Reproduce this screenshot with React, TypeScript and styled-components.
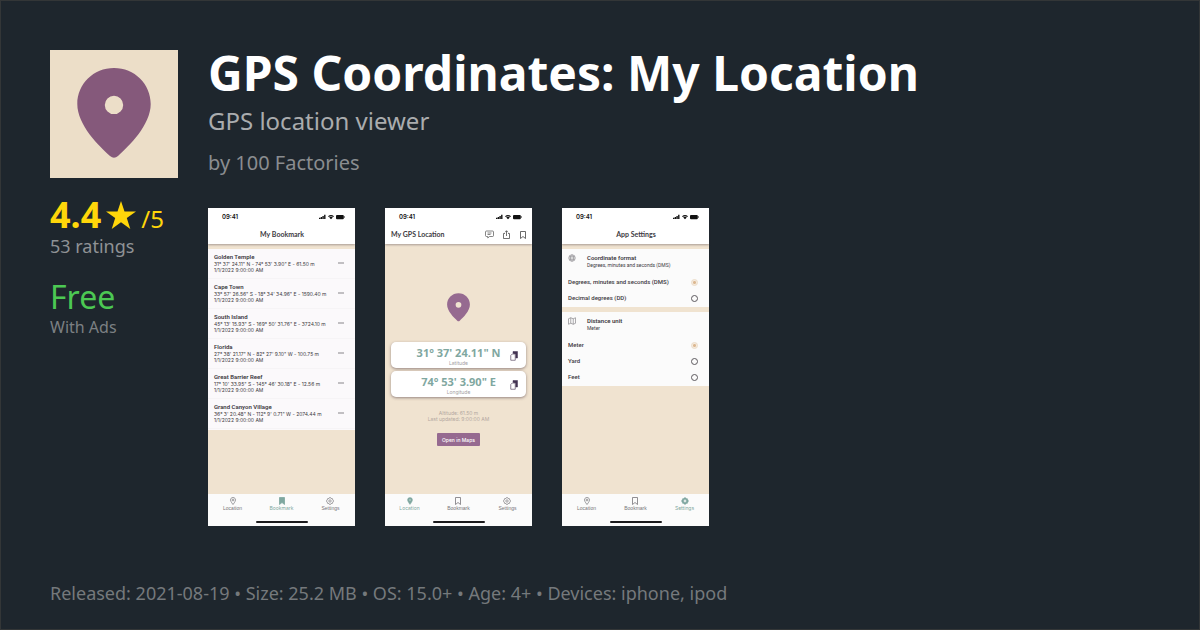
import React from "react";
import styled, { createGlobalStyle } from "styled-components";

const GlobalStyle = createGlobalStyle`
  *, *::before, *::after { box-sizing: border-box; }
  body { margin: 0; background: #1e262d; }
  h1, h2, h3, p, ul, fieldset { margin: 0; padding: 0; border: 0; }
  button, input { margin: 0; padding: 0; border: 0; background: none; font: inherit; color: inherit; }
  svg { display: block; flex: none; }
`;

const Page = styled.div`
  display: flex;
  flex-direction: column;
  min-height: 100vh;
  padding: 49px 49px 24px;
  border: 1px solid #333637;
  background: #1e262d;
  font-family: "Noto Sans", "Open Sans", sans-serif;
`;

const Header = styled.header`
  display: flex;
  gap: 30px;
`;

const Heading = styled.div`
  display: flex;
  flex-direction: column;
  gap: 8px;
  padding-top: 1px;
`;

const Title = styled.h1`
  font-size: 48px;
  line-height: 44px;
  font-weight: 700;
  color: #fff;
`;

const Subtitle = styled.p`
  font-size: 24px;
  line-height: 36px;
  color: #aaacae;
`;

const Author = styled.p`
  font-size: 20px;
  line-height: 32px;
  color: #8a8d90;
`;

const Body = styled.div`
  display: flex;
  gap: 30px;
  padding-top: 17px;
`;

const Stats = styled.aside`
  display: flex;
  flex-direction: column;
  width: 128px;
  flex: none;
`;

const Rating = styled.p`
  display: flex;
  align-items: baseline;
  gap: 5px;
  height: 38px;
  font-size: 36px;
  line-height: 38px;
  color: #ffd60a;
  svg { align-self: center; }
`;

const OutOf = styled.span`
  font-size: 24px;
  line-height: 24px;
`;

const Price = styled.p`
  margin-top: 21px;
  font-size: 32px;
  line-height: 36px;
  color: #4cc853;
`;

const Note = styled.p<{ $size: number; $color: string }>`
  font-size: ${(p) => p.$size}px;
  line-height: 24px;
  color: ${(p) => p.$color};
`;

const Shots = styled.div`
  display: flex;
  flex-wrap: wrap;
  gap: 30px;
  padding-top: 12px;
`;

const Footer = styled.footer`
  margin-top: auto;
  font-size: 18px;
  line-height: 24px;
  color: #75797c;
`;

const Phone = styled.section`
  display: flex;
  flex-direction: column;
  width: 147px;
  height: 318px;
  background: #f0e3d0;
  color: #3d3a42;
  font-family: Inter, "Open Sans", sans-serif;
  font-size: 5px;
  line-height: 6px;
`;

const Top = styled.div`
  height: 36px;
  background: #fff;
  box-shadow: 0 1px 2px rgba(60, 50, 60, 0.4);
`;

const StatusBar = styled.div`
  display: flex;
  align-items: center;
  gap: 3px;
  height: 17px;
  padding: 0 10px 0 14px;
  font-size: 6px;
  font-weight: 600;
  color: #111;
  span { margin-right: auto; }
`;

const NavBar = styled.div<{ $start?: boolean }>`
  display: flex;
  align-items: center;
  justify-content: ${(p) => (p.$start ? "flex-start" : "center")};
  gap: 8px;
  height: 19px;
  padding: 0 5px 0 6px;
`;

const NavTitle = styled.h2<{ $start?: boolean }>`
  font-family: Lato, "Noto Sans", sans-serif;
  font-size: 7px;
  line-height: 9px;
  font-weight: 700;
  margin-right: ${(p) => (p.$start ? "auto" : "0")};
`;

const IconButton = styled.button<{ $color?: string }>`
  display: flex;
  color: ${(p) => p.$color || "#444"};
`;

const Screen = styled.div`
  display: flex;
  flex-direction: column;
  flex: 1;
  gap: 5px;
  padding-top: 5px;
`;

const List = styled.ul`
  list-style: none;
  background: #fbf9fb;
  padding-bottom: 1px;
`;

const Place = styled.li`
  display: flex;
  align-items: center;
  justify-content: space-between;
  height: 30px;
  padding: 4px 11px 6px 6px;
  border-bottom: 1px solid #f6f4f6;
  white-space: nowrap;
`;

const Strong = styled.h3`
  font-family: Roboto, Inter, sans-serif;
  font-size: 6px;
  line-height: 8px;
  font-weight: 600;
`;

const TabBar = styled.nav`
  display: grid;
  grid-template-columns: repeat(3, 1fr);
  justify-items: center;
  align-content: space-between;
  height: 32px;
  padding: 3px 0;
  background: #fbfbfb;
`;

const Tab = styled.button<{ $active?: boolean }>`
  display: flex;
  flex-direction: column;
  align-items: center;
  font-family: ${(p) => (p.$active ? "Inter" : '"Liberation Sans"')}, sans-serif;
  font-size: 5px;
  line-height: 6px;
  color: ${(p) => (p.$active ? "#7fa7a0" : "#77757a")};
`;

const HomeBar = styled.div`
  grid-column: 1 / -1;
  width: 52px;
  height: 2px;
  border-radius: 1px;
  background: #1b1a1c;
`;

const LocationScreen = styled.div`
  display: flex;
  flex-direction: column;
  align-items: center;
  flex: 1;
  padding: 49px 6px 0;
`;

const Cards = styled.div`
  display: flex;
  flex-direction: column;
  gap: 3px;
  width: 100%;
  padding: 20px 0 13px;
`;

const Card = styled.div`
  display: grid;
  grid-template-columns: 10px 1fr 10px;
  align-items: center;
  height: 26px;
  padding: 2px 6px 0;
  border-radius: 5px;
  background: #fff;
  box-shadow: 0 1px 3px rgba(60, 40, 50, 0.5);
  text-align: center;
`;

const CardText = styled.div`
  grid-column: 2;
  color: #a3a0a3;
  white-space: nowrap;
`;

const Degrees = styled.p`
  font-family: "Open Sans", "Noto Sans", sans-serif;
  font-size: 11px;
  line-height: 14px;
  font-weight: 700;
  color: #7fa7a0;
`;

const Faint = styled.p`
  color: #b3a8a0;
  text-align: center;
`;

const MapsButton = styled.button`
  width: 43px;
  height: 13px;
  margin-top: 11px;
  border-radius: 1px;
  background: #966a90;
  color: #fff;
  font-weight: 500;
  white-space: nowrap;
`;

const Group = styled.fieldset`
  min-width: 0;
  padding: 5px 11px 1px 6px;
  background: #fbfbfb;
  font-family: Roboto, Inter, sans-serif;
`;

const GroupHead = styled.div`
  display: grid;
  grid-template-columns: 19px 1fr;
  height: 20px;
  color: #3d3a42;
`;

const Option = styled.label`
  display: flex;
  align-items: center;
  justify-content: space-between;
  height: 16px;
  font-size: 6px;
  font-weight: 500;
`;

const Radio = styled.input`
  appearance: none;
  width: 7px;
  height: 7px;
  border: 1px solid #5c595e;
  border-radius: 50%;
  &:checked {
    border-color: #ecdcc8;
    background: radial-gradient(circle, #dcb892 0 1px, #f5ebdf 2px);
  }
`;

const PIN =
  "M64 18C43.5 18 27.3 34 27.3 54C27.3 75 49 96 60 106Q64 109.6 68 106C79 96 100.7 75 100.7 54C100.7 34 84.5 18 64 18Z";
const HOLE = "M64 45.700A9.200 9.200 0 1 0 64 64.100A9.200 9.200 0 1 0 64 45.700Z";

const AppIcon = () => (
  <svg width="128" height="128" viewBox="0 0 128 128" role="img" aria-label="App icon">
    <rect width="128" height="128" fill="#ecdec8" />
    <path d={PIN + HOLE} fill="#85597b" fillRule="evenodd" />
  </svg>
);

const Pin = () => (
  <svg width="23" height="29" viewBox="27 18 74 91" aria-hidden="true">
    <path d={PIN + HOLE} fill="#966a90" fillRule="evenodd" />
  </svg>
);

const Star = () => (
  <svg width="30" height="30" viewBox="0 0 30 30" aria-hidden="true">
    <path fill="#ffd60a" d="M15 1L18.500 11.500H30L20.800 18L24.300 29L15 22.300L5.700 29L9.200 18L0 11.500H11.500Z" />
  </svg>
);

const StatusIcons = () => (
  <svg width="26" height="6" viewBox="0 0 26 6" fill="#111" aria-hidden="true">
    <path d="M0 3.700h1.400V5H0zM1.700 3h1.400v2H1.700zM3.400 2h1.400v3H3.400zM5.100 .8h1.400V5H5.100z" />
    <path d="M9 2.300Q12 -.5 15 2.300L14.200 3.100Q12 1.300 9.800 3.100ZM10.200 3.500Q12 2 13.800 3.500L12 5.300Z" />
    <rect x="17" y=".9" width="7.800" height="4.300" rx="1" />
    <rect x="25" y="2.300" width=".7" height="1.400" />
  </svg>
);

type IconProps = { filled?: boolean };

const line = { fill: "none", stroke: "currentColor", strokeWidth: 1.6, strokeLinejoin: "round" as const };

const TabPin = ({ filled }: IconProps) => (
  <svg width="8" height="8" viewBox="0 0 16 16" {...line} aria-hidden="true">
    <path
      d={filled ? "M8 1C4.600 1 3 3.400 3 6C3 9 8 15 8 15C8 15 13 9 13 6C13 3.400 11.400 1 8 1ZM8 4.400A1.600 1.600 0 1 1 8 7.600A1.600 1.600 0 1 1 8 4.400Z" : "M8 1C4.600 1 3 3.400 3 6C3 9 8 15 8 15C8 15 13 9 13 6C13 3.400 11.400 1 8 1Z"}
      fill={filled ? "currentColor" : "none"}
      fillRule="evenodd"
      strokeWidth={filled ? 0.8 : 1.4}
    />
    {!filled && <circle cx="8" cy="6" r="1.800" strokeWidth="1.400" />}
  </svg>
);

const BookmarkIcon = ({ filled }: IconProps) => (
  <svg width="8" height="8" viewBox="0 0 16 16" {...line} aria-hidden="true">
    <path d="M3 1H13V15L8 11L3 15Z" fill={filled ? "currentColor" : "none"} />
  </svg>
);

const GEAR = "M6.500 1.500H9.500L10.500 3L13 3.500L13.500 5.500L14.500 6.500V9.500L13.500 10.500L13 12.500L10.500 13L9.500 14.500H6.500L5.500 13L3 12.500L2.500 10.500L1.500 9.500V6.500L2.500 5.500L3 3.500L5.500 3Z";

const Gear = ({ filled }: IconProps) =>
  filled ? (
    <svg width="8" height="8" viewBox="0 0 16 16" {...line} aria-hidden="true">
      <path
        d={GEAR + "M8 5.200A2.800 2.800 0 1 0 8 10.800A2.800 2.800 0 1 0 8 5.200Z"}
        fill="currentColor"
        fillRule="evenodd"
        strokeWidth="1"
      />
    </svg>
  ) : (
    <svg width="8" height="8" viewBox="0 0 16 16" {...line} aria-hidden="true">
      <path d={GEAR} strokeWidth="1.500" />
      <circle cx="8" cy="8" r="2.400" strokeWidth="1.300" />
    </svg>
  );

const Chat = () => (
  <svg width="9" height="9" viewBox="0 0 18 18" {...line} strokeWidth={1.3} aria-hidden="true">
    <path d="M3 2H15Q17 2 17 4V11Q17 13 15 13H9L5.500 16V13H3Q1 13 1 11V4Q1 2 3 2ZM5 6H13M5 9H11" />
  </svg>
);

const Share = () => (
  <svg width="9" height="9" viewBox="0 0 18 18" {...line} strokeWidth={1.5} aria-hidden="true">
    <path d="M6 7H3V17H15V7H12M9 12V1.500M6 4.500L9 1.500L12 4.500" />
  </svg>
);

const Copy = () => (
  <svg width="8" height="10" viewBox="0 0 16 20" aria-hidden="true">
    <path d="M6 1H15V14H11V7L6 5Z" fill="#433352" stroke="#433352" strokeLinejoin="round" />
    <path d="M4.500 6H10.500V18.500H1.500V9Z" fill="#fff" stroke="#66586f" strokeWidth="1.500" strokeLinejoin="round" />
  </svg>
);

const Dots = () => (
  <svg width="6" height="2" viewBox="0 0 6 2" fill="#77747a" aria-hidden="true">
    <circle cx="1" cy="1" r=".8" />
    <circle cx="3" cy="1" r=".8" />
    <circle cx="5" cy="1" r=".8" />
  </svg>
);

const Globe = () => (
  <svg width="8" height="8" viewBox="0 0 16 16" fill="none" stroke="#77757a" strokeWidth="1" aria-hidden="true">
    <circle cx="8" cy="8" r="6.500" />
    <ellipse cx="8" cy="8" rx="3" ry="6.500" />
    <path d="M1.500 8H14.500M2.500 4.800H13.500M2.500 11.200H13.500" />
  </svg>
);

const MapIcon = () => (
  <svg width="8" height="8" viewBox="0 0 16 16" fill="none" stroke="#77757a" strokeWidth="1.200" strokeLinejoin="round" aria-hidden="true">
    <path d="M1 3.500L5.500 1.500L10.500 3.500L15 1.500V12.500L10.500 14.500L5.500 12.500L1 14.500ZM5.500 1.500V12.500M10.500 3.500V14.500" />
  </svg>
);

const tabs = [
  { name: "Location", Icon: TabPin },
  { name: "Bookmark", Icon: BookmarkIcon },
  { name: "Settings", Icon: Gear },
];

function PhoneTop({ title, children }: { title: string; children?: React.ReactNode }) {
  const start = Boolean(children);
  return (
    <Top>
      <StatusBar>
        <span>09:41</span>
        <StatusIcons />
      </StatusBar>
      <NavBar $start={start}>
        <NavTitle $start={start}>{title}</NavTitle>
        {children}
      </NavBar>
    </Top>
  );
}

function Tabs({ active }: { active: string }) {
  return (
    <TabBar>
      {tabs.map(({ name, Icon }) => (
        <Tab key={name} type="button" $active={name === active}>
          <Icon filled={name === active} />
          {name}
        </Tab>
      ))}
      <HomeBar />
    </TabBar>
  );
}

const places = [
  ["Golden Temple", "31° 37' 24.11\" N - 74° 53' 3.90\" E - 61.50 m"],
  ["Cape Town", "33° 57' 26.56\" S - 18° 34' 34.96\" E - 1590.40 m"],
  ["South Island", "45° 13' 15.93\" S - 169° 50' 31.76\" E - 3724.10 m"],
  ["Florida", "27° 38' 21.17\" N - 82° 27' 9.10\" W - 100.75 m"],
  ["Great Barrier Reef", "17° 10' 33.95\" S - 145° 46' 30.18\" E - 12.56 m"],
  ["Grand Canyon Village", "36° 3' 20.48\" N - 112° 9' 0.71\" W - 2074.44 m"],
];

const coordinates = [
  ["31° 37' 24.11\" N", "Latitude"],
  ["74° 53' 3.90\" E", "Longitude"],
];

const groups = [
  {
    name: "Coordinate format",
    value: "Degrees, minutes and seconds (DMS)",
    Icon: Globe,
    options: ["Degrees, minutes and seconds (DMS)", "Decimal degrees (DD)"],
  },
  { name: "Distance unit", value: "Meter", Icon: MapIcon, options: ["Meter", "Yard", "Feet"] },
];

export default function App() {
  return (
    <>
      <GlobalStyle />
      <Page>
        <Header>
          <AppIcon />
          <Heading>
            <Title>GPS Coordinates: My Location</Title>
            <Subtitle>GPS location viewer</Subtitle>
            <Author>by 100 Factories</Author>
          </Heading>
        </Header>
        <Body>
          <Stats>
            <Rating>
              <b>4.4</b>
              <Star />
              <OutOf>/5</OutOf>
            </Rating>
            <Note $size={18} $color="#8f9295">53 ratings</Note>
            <Price>Free</Price>
            <Note $size={16} $color="#7c8083">With Ads</Note>
          </Stats>
          <Shots>
            <Phone>
              <PhoneTop title="My Bookmark" />
              <Screen>
                <List>
                  {places.map(([name, coords]) => (
                    <Place key={name}>
                      <div>
                        <Strong>{name}</Strong>
                        <p>{coords}</p>
                        <p>1/1/2022 9:00:00 AM</p>
                      </div>
                      <IconButton type="button" aria-label={`More about ${name}`}>
                        <Dots />
                      </IconButton>
                    </Place>
                  ))}
                </List>
              </Screen>
              <Tabs active="Bookmark" />
            </Phone>
            <Phone>
              <PhoneTop title="My GPS Location">
                <IconButton type="button" aria-label="Feedback"><Chat /></IconButton>
                <IconButton type="button" aria-label="Share"><Share /></IconButton>
                <IconButton type="button" aria-label="Save bookmark"><BookmarkIcon /></IconButton>
              </PhoneTop>
              <LocationScreen>
                <Pin />
                <Cards>
                  {coordinates.map(([value, label]) => (
                    <Card key={label}>
                      <CardText>
                        <Degrees>{value}</Degrees>
                        <p>{label}</p>
                      </CardText>
                      <IconButton type="button" aria-label={`Copy ${label}`}>
                        <Copy />
                      </IconButton>
                    </Card>
                  ))}
                </Cards>
                <Faint>Altitude: 61.50 m</Faint>
                <Faint>Last updated: 9:00:00 AM</Faint>
                <MapsButton type="button">Open in Maps</MapsButton>
              </LocationScreen>
              <Tabs active="Location" />
            </Phone>
            <Phone>
              <PhoneTop title="App Settings" />
              <Screen>
                {groups.map(({ name, value, Icon, options }) => (
                  <Group key={name} aria-label={name}>
                    <GroupHead>
                      <Icon />
                      <div>
                        <Strong>{name}</Strong>
                        <p>{value}</p>
                      </div>
                    </GroupHead>
                    {options.map((option, i) => (
                      <Option key={option}>
                        {option}
                        <Radio type="radio" name={name} defaultChecked={i === 0} />
                      </Option>
                    ))}
                  </Group>
                ))}
              </Screen>
              <Tabs active="Settings" />
            </Phone>
          </Shots>
        </Body>
        <Footer>Released: 2021-08-19 • Size: 25.2 MB • OS: 15.0+ • Age: 4+ • Devices: iphone, ipod</Footer>
      </Page>
    </>
  );
}
